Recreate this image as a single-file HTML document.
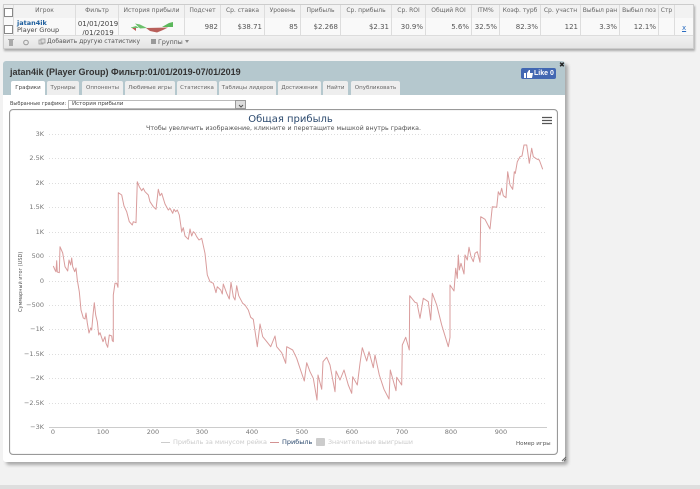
<!DOCTYPE html>
<html><head><meta charset="utf-8">
<style>
html,body{margin:0;padding:0}
body{width:700px;height:489px;position:relative;overflow:hidden;background:#f2f2f2;font-family:"DejaVu Sans","Liberation Sans",sans-serif;color:#555;filter:blur(.3px)}
.a{position:absolute;white-space:nowrap}
.h{position:absolute;top:5px;height:13px;line-height:12px;font-size:6px;text-align:center;color:#666;background:#f2f2f2;border-right:1px solid #ddd;box-sizing:border-box;overflow:hidden;white-space:nowrap}
.c{position:absolute;top:18px;height:17px;line-height:18px;font-size:7px;text-align:right;padding-right:2px;color:#555;border-right:1px solid #ddd;box-sizing:border-box;white-space:nowrap;overflow:hidden;background:#f9f9f9}
.t{position:absolute;top:81px;height:14px;line-height:14px;font-size:5.5px;text-align:center;color:#666;background:#eee;border-radius:2px 2px 0 0;box-sizing:border-box}
.y{position:absolute;font-size:6.5px;color:#777;text-align:right;width:30px;left:14px;line-height:8px}
.x{position:absolute;font-size:6.5px;color:#777;top:428px;width:30px;text-align:center;line-height:9px}
</style></head><body>
<div class="a" style="left:3px;top:4px;width:691px;height:45px;background:#f3f3f3;border:1px solid #ccc;box-sizing:border-box;box-shadow:1px 2px 2px #aaa"></div>
<div class="a" style="left:0;top:485px;width:700px;height:4px;background:#dedede"></div>

<div class="h" style="left:4px;width:10px"></div>
<div class="a" style="left:4px;top:8px;width:7px;height:7px;border:1px solid #888;background:#fff"></div>
<div class="h" style="left:14px;width:62px">Игрок</div>
<div class="h" style="left:76px;width:43px">Фильтр</div>
<div class="h" style="left:119px;width:66px">История прибыли</div>
<div class="h" style="left:185px;width:36px">Подсчет</div>
<div class="h" style="left:221px;width:44px">Ср. ставка</div>
<div class="h" style="left:265px;width:36px">Уровень</div>
<div class="h" style="left:301px;width:40px">Прибыль</div>
<div class="h" style="left:341px;width:51px">Ср. прибыль</div>
<div class="h" style="left:392px;width:34px">Ср. ROI</div>
<div class="h" style="left:426px;width:46px">Общий ROI</div>
<div class="h" style="left:472px;width:28px">ITM%</div>
<div class="h" style="left:500px;width:41px">Коэф. турб</div>
<div class="h" style="left:541px;width:40px">Ср. участн</div>
<div class="h" style="left:581px;width:39px">Выбыл ран</div>
<div class="h" style="left:620px;width:39px">Выбыл поз</div>
<div class="h" style="left:659px;width:16px">Стр</div>
<div class="h" style="left:675px;width:18px;border-right:0"></div>

<div class="c" style="left:4px;width:10px"></div>
<div class="a" style="left:4px;top:25px;width:7px;height:7px;border:1px solid #888;background:#fff"></div>
<div class="c" style="left:14px;width:62px"></div>
<div class="a" style="left:17px;top:20px;font-size:6.5px;line-height:7px;color:#1a5c9c;font-weight:bold">jatan4ik</div>
<div class="a" style="left:17px;top:27px;font-size:6.5px;line-height:7px;color:#444">Player Group</div>
<div class="c" style="left:76px;width:43px;padding:0"></div>
<div class="a" style="left:77px;top:20px;width:42px;font-size:7px;line-height:9px;text-align:center;color:#444">01/01/2019<br>/01/2019</div>
<div class="c" style="left:119px;width:66px"></div>
<svg class="a" style="left:130px;top:20px" width="46" height="14"><path d="M1 7.5L6 6L9 8L1 8Z" fill="#6cc06c"/><path d="M5 2.5L10 3.5L17 7L10 7.5Z" fill="#6cc06c" transform="translate(0,1)"/><path d="M32 7L39 3L43 2L43 7Z" fill="#5cb85c"/><path d="M2 8L6 8L6 11Z" fill="#bb5a55"/><path d="M16 8L38 7.5L33 10L27 12.5L20 11Z" fill="#b85f5a"/></svg>
<div class="c" style="left:185px;width:36px">982</div>
<div class="c" style="left:221px;width:44px">$38.71</div>
<div class="c" style="left:265px;width:36px">85</div>
<div class="c" style="left:301px;width:40px">$2.268</div>
<div class="c" style="left:341px;width:51px">$2.31</div>
<div class="c" style="left:392px;width:34px">30.9%</div>
<div class="c" style="left:426px;width:46px">5.6%</div>
<div class="c" style="left:472px;width:28px">32.5%</div>
<div class="c" style="left:500px;width:41px">82.3%</div>
<div class="c" style="left:541px;width:40px">121</div>
<div class="c" style="left:581px;width:39px">3.3%</div>
<div class="c" style="left:620px;width:39px">12.1%</div>
<div class="c" style="left:659px;width:16px"></div>
<div class="c" style="left:675px;width:18px;border-right:0"></div>
<div class="a" style="left:682px;top:24px;font-size:7px;line-height:9px;color:#2a6cc0;text-decoration:underline">x</div>
<div class="a" style="left:4px;top:35px;width:689px;height:13px;background:linear-gradient(#f0f0f0,#e4e4e4);border-top:1px solid #ddd;box-sizing:border-box"></div>
<svg class="a" style="left:6px;top:37px" width="60" height="12"><rect x="3" y="3" width="4" height="6" fill="#aaa"/><rect x="2" y="2" width="6" height="1" fill="#aaa"/><circle cx="20" cy="5.5" r="2.3" fill="none" stroke="#999"/><rect x="33" y="3" width="4" height="4" fill="none" stroke="#999" stroke-width=".8"/><rect x="35" y="2" width="4" height="4" fill="#ddd" stroke="#999" stroke-width=".8"/></svg>
<div class="a" style="left:47px;top:38px;font-size:6px;line-height:8px;color:#555">Добавить другую статистику</div>
<div class="a" style="left:151px;top:39px;width:5px;height:5px;background:#999"></div>
<div class="a" style="left:158px;top:38px;font-size:6.3px;line-height:9px;color:#555">Группы</div>
<div class="a" style="left:185px;top:40px;width:0;height:0;border:2px solid transparent;border-top:3px solid #888"></div>

<div class="a" style="left:3px;top:61px;width:562px;height:401px;background:#fff;border-radius:3px;box-shadow:3px 3px 3px #aaa"></div>
<div class="a" style="left:3px;top:61px;width:562px;height:34px;background:#b5c8ce;border-radius:3px 3px 0 0"></div>
<div class="a" style="left:10px;top:65px;font-family:'Liberation Sans',sans-serif;font-size:9px;font-weight:bold;line-height:14px;color:#333">jatan4ik (Player Group) Фильтр:01/01/2019-07/01/2019</div>
<div class="t" style="left:11px;width:34px;background:#fff;color:#444">Графики</div>
<div class="t" style="left:47px;width:32px">Турниры</div>
<div class="t" style="left:82px;width:41px">Оппоненты</div>
<div class="t" style="left:125px;width:50px">Любимые игры</div>
<div class="t" style="left:177px;width:40px">Статистика</div>
<div class="t" style="left:219px;width:57px">Таблицы лидеров</div>
<div class="t" style="left:278px;width:43px">Достижения</div>
<div class="t" style="left:323px;width:25px">Найти</div>
<div class="t" style="left:351px;width:49px">Опубликовать</div>
<div class="a" style="left:521px;top:68px;width:35px;height:11px;background:#4267b2;border-radius:2px;color:#fff;font-family:'Liberation Sans',sans-serif;font-size:7px;font-weight:bold;line-height:11px;text-indent:13px">Like 0</div>
<svg class="a" style="left:524px;top:70px" width="9" height="8"><path d="M0 3H2V8H0ZM3 3L5 0H6V3H9L8 8H3Z" fill="#fff"/></svg>
<div class="a" style="left:559px;top:61px;font-size:7px;line-height:9px;font-weight:bold;color:#222">✖</div>

<div class="a" style="left:10px;top:101px;font-size:5px;line-height:7px;color:#444">Выбранные графики:</div>
<div class="a" style="left:68px;top:100px;width:178px;height:9px;background:#fff;border:1px solid #bbb;box-sizing:border-box;font-size:5.5px;line-height:7px;color:#444;padding-left:3px">История прибыли</div>
<div class="a" style="left:235px;top:100px;width:11px;height:9px;background:#ddd;border:1px solid #999;box-sizing:border-box"></div>
<svg class="a" style="left:238px;top:103px" width="6" height="6"><path d="M1 2L3 4L5 2" fill="none" stroke="#555"/></svg>

<div class="a" style="left:9px;top:109px;width:549px;height:346px;border:1px solid #999;border-radius:4px;box-sizing:border-box;box-shadow:inset 0 0 1px #bbb"></div>
<div class="a" style="left:16px;top:113px;width:549px;text-align:center;font-family:'DejaVu Sans',sans-serif;font-size:10px;line-height:13px;color:#2c4a6e">Общая прибыль</div>
<div class="a" style="left:9px;top:124px;width:549px;text-align:center;font-size:6.3px;line-height:9px;color:#555">Чтобы увеличить изображение, кликните и перетащите мышкой внутрь графика.</div>
<svg class="a" style="left:541px;top:116px" width="12" height="10"><path d="M1 1.500H11M1 4.500H11M1 7.500H11" stroke="#555" stroke-width="1.300"/></svg>

<svg class="a" style="left:0;top:0" width="700" height="489">
<g stroke="#ddd" stroke-width="1" stroke-dasharray="1 2" fill="none">
<path d="M49 134.500H547M49 158.500H547M49 183.500H547M49 207.500H547M49 232.500H547M49 256.500H547M49 281.500H547M49 305.500H547M49 329.500H547M49 354.500H547M49 378.500H547M49 403.500H547"/>
</g>
<path d="M49 427.500H547" stroke="#ccc" stroke-width="1"/>
<path fill="none" stroke="#d99c9c" stroke-width="1" stroke-linejoin="round" d="M53.300 266L55 270L56 271.700L56.700 260.700L57.300 272L59.300 272.700L60 246.700L62.700 253L65 266.700L67.700 271L69 260L70.700 265L71.700 258L72.700 266.700L74.700 271.700L76 268L77.300 280L79.300 291.700L81 310L83.300 318L85 319L86 313L87.300 323L89 333L90.700 328L91.700 330L93 315L94.300 302.700L95.700 315L97.300 321.700L98.700 335L100 332.700L103 341.700L105 336.700L106 343.300L107.700 347.300L109.300 335L111.700 336L112.300 340.700L113.300 341.700L113.300 295L115 283.300L116.700 283.300L118 287.300L118.300 192.700L121.700 195L124 206L126.700 211.700L129.300 221.700L132.300 225L133.300 221.700L136 222.700L137.300 181.700L139.300 186.700L141.700 190.700L143.300 188.300L145 191.700L148.300 195L150 201.700L153.300 206.700L156 209.300L158.300 189.300L160 195.700L161.700 193.300L165 204L168.300 210L170 208.300L172.700 213.300L174 209.300L175.700 211.700L177.300 210L179.300 215L181.700 231.700L183.300 227.700L185 236L188.300 239.300L190 229L191.700 236L193.300 231.700L195 233.300L196.700 236.700L199 240L201.700 238.300L205 253.300L207.300 275L210 281.700L213.300 283.300L216 292.700L217.300 286.700L220.700 290L222.300 294L223.300 284L226.700 293.300L229.300 299L231 282.300L233.300 296.700L235 300L236.700 285.700L238.700 295.700L242.700 303.300L245 305L248.300 310L250.700 317.300L253.300 319.300L257.300 346.700L260 324L262.700 336.700L266 340.700L270.700 346.700L275 336L276.700 346.700L281.700 352.700L285.700 363.300L286.700 346.700L292.700 350L296.700 358.300L300 368.300L304.300 381L306.700 362.700L310 371.700L313.300 378.300L317 400L318 375L321.700 389.300L323 361.700L326.700 357.300L330 365L335 391.700L336 371L340 380L344 370L348.300 385L351.700 393.300L352.700 376.700L357.300 385L360 363.300L362.300 347.700L366.700 361L369 351.700L373.300 367.700L375 355L379.300 375L384 389.300L389 399L390.300 370L396 390.700L396.700 377.300L401.700 385L402.300 345L405.700 337.300L409.300 350L409.700 295.700L415 302.300L417 303L420 318.300L423.300 298.300L428.300 301.700L430.700 320L432.300 293.300L436.700 305L441.700 325L448.300 346.700L450 337.300L450 285L454 291L455.700 268.300L457.300 278.300L458.300 255L459.300 270L461 263.300L464 274L465 255L467.300 260L469 247.300L471 256.700L473.300 261.700L475 253.300L477.300 251.700L480 262.300L480.700 216.700L485 219.300L490 229L492.300 206.700L496.700 207.300L498.300 191.700L500 195L501.700 188.300L503.300 195.700L506 197.700L507.700 171.700L510 185L512.700 189.300L514.300 171.700L515.300 173.300L517.300 161.700L520 156.700L522 156L524 145L526.700 145L529.300 163.300L531.700 148.300L533.300 156.700L536.700 159L539.300 160L542.700 169.300"/>
</svg>

<div class="y" style="top:130px">3K</div>
<div class="y" style="top:154px">2.5K</div>
<div class="y" style="top:179px">2K</div>
<div class="y" style="top:203px">1.5K</div>
<div class="y" style="top:228px">1K</div>
<div class="y" style="top:252px">500</div>
<div class="y" style="top:277px">0</div>
<div class="y" style="top:301px">−500</div>
<div class="y" style="top:325px">−1K</div>
<div class="y" style="top:350px">−1.5K</div>
<div class="y" style="top:374px">−2K</div>
<div class="y" style="top:399px">−2.5K</div>
<div class="y" style="top:423px">−3K</div>
<div class="x" style="left:38px">0</div>
<div class="x" style="left:88px">100</div>
<div class="x" style="left:138px">200</div>
<div class="x" style="left:187px">300</div>
<div class="x" style="left:237px">400</div>
<div class="x" style="left:287px">500</div>
<div class="x" style="left:337px">600</div>
<div class="x" style="left:387px">700</div>
<div class="x" style="left:436px">800</div>
<div class="x" style="left:486px">900</div>
<div class="a" style="left:18px;top:312px;font-size:5px;line-height:6px;color:#555;transform-origin:0 0;transform:rotate(-90deg)">Суммарный итог (USD)</div>
<div class="a" style="left:516px;top:441px;font-size:5.5px;line-height:7px;color:#555">Номер игры</div>

<div class="a" style="left:161px;top:442px;width:9px;height:1px;background:#ccc"></div>
<div class="a" style="left:173px;top:438px;font-size:6.5px;line-height:9px;color:#ccc">Прибыль за минусом рейка</div>
<div class="a" style="left:270px;top:442px;width:9px;height:1px;background:#d39292"></div>
<div class="a" style="left:282px;top:438px;font-size:6.5px;line-height:9px;color:#2c4a6e">Прибыль</div>
<div class="a" style="left:316px;top:438px;width:9px;height:8px;background:#ccc;border-radius:1px"></div>
<div class="a" style="left:328px;top:438px;font-size:6.3px;line-height:9px;color:#ccc">Значительные выигрыши</div>
<svg class="a" style="left:561px;top:456px" width="6" height="6"><path d="M5 1L1 5M5 3L3 5" stroke="#666" stroke-width="1"/></svg>
</body></html>
